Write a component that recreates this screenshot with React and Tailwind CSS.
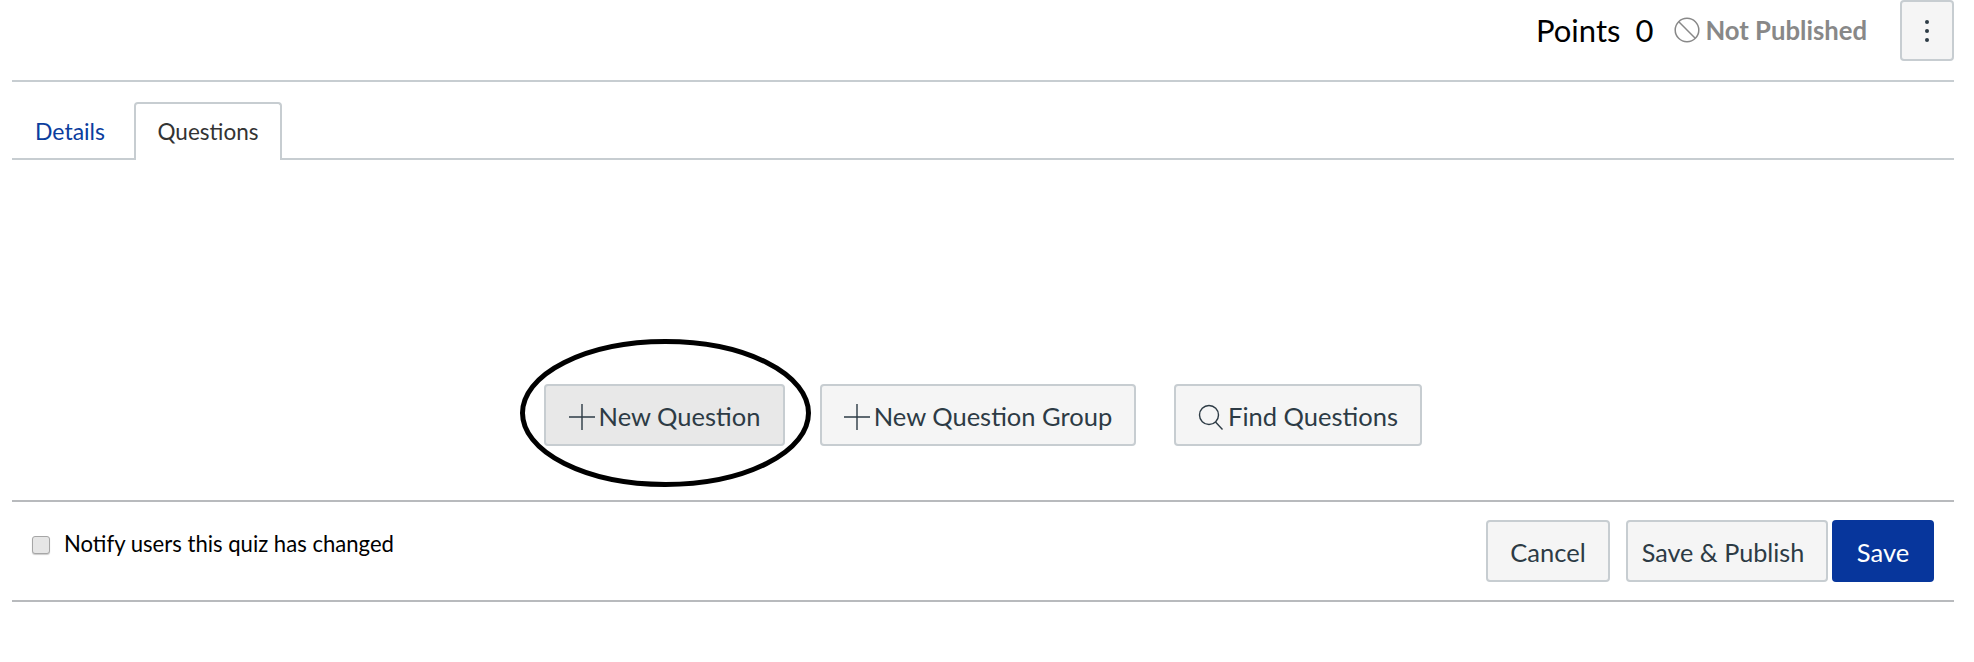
import React from 'react';

const btn = 'h-[62px] flex items-center justify-center whitespace-nowrap rounded-[4px] border-2 border-[#c7cdd1] bg-[#f5f5f5] text-[#2d3b45] text-[25.5px] leading-none pt-[4px]';

const PlusIcon = () => (
  <svg width="26" height="26" viewBox="0 0 26 26" className="mr-[4px] shrink-0" fill="none" stroke="#2d3b45" strokeWidth="1.4">
    <path d="M13 0v26M0 13h26" />
  </svg>
);

const SearchIcon = () => (
  <svg width="26" height="26" viewBox="0 0 26 26" className="mr-[4px] shrink-0" fill="none" stroke="#2d3b45" strokeWidth="1.4">
    <circle cx="11" cy="11" r="9.5" />
    <path d="M17.5 18l7 7.5" />
  </svg>
);

const NotPublishedIcon = () => (
  <svg width="26" height="26" viewBox="0 0 26 26" fill="none" stroke="#888888" strokeWidth="1.5">
    <circle cx="13" cy="13" r="11.8" />
    <path d="M4.8 4.8l16.4 16.4" />
  </svg>
);

export default function App() {
  return (
    <div className="w-full h-[662px] bg-white pl-[12px] pr-[20px] font-['Lato','Open_Sans',sans-serif]">
      {/* Header */}
      <div className="h-[82px] border-b-2 border-[#c7cdd1] flex justify-end items-start">
        <div className="h-[60px] flex items-center">
          <span className="text-[31px] leading-none text-black">Points</span>
          <span className="text-[31px] leading-none text-black ml-[15px]">0</span>
          <div className="ml-[21px] mr-[5px]"><NotPublishedIcon /></div>
          <span className="text-[25.7px] leading-none font-bold text-[#888888] pt-[2px]">Not Published</span>
        </div>
        <button className="ml-[33px] w-[54px] h-[61px] flex flex-col items-center justify-center gap-[5px] rounded-[4px] border-2 border-[#c7cdd1] bg-[#f5f5f5]">
          <span className="w-[4px] h-[4px] rounded-full bg-[#2d3b45]" />
          <span className="w-[4px] h-[4px] rounded-full bg-[#2d3b45]" />
          <span className="w-[4px] h-[4px] rounded-full bg-[#2d3b45]" />
        </button>
      </div>

      {/* Tabs */}
      <div className="mt-[20px] h-[58px] border-b-2 border-[#c7cdd1] flex items-start pl-[23px]">
        <a className="w-[99px] h-[58px] flex items-center text-[23px] text-[#0b3d9e]">Details</a>
        <div className="w-[148px] h-[58px] flex items-center justify-center bg-white border-2 border-b-0 border-[#c7cdd1] rounded-t-[4px] text-[22.5px] text-[#333333] -mb-[2px] relative z-10">
          Questions
        </div>
      </div>

      {/* Question actions */}
      <div className="mt-[224px] h-[62px] flex pl-[532px]">
        <div className="relative">
          <button className={`${btn} w-[241px] !bg-[#e8e8e8]`}>
            <PlusIcon />
            New Question
          </button>
          <svg width="293" height="152" viewBox="0 0 293 152" className="absolute left-[-25px] top-[-47px] pointer-events-none" fill="none" stroke="#000000" strokeWidth="5">
            <ellipse cx="146.5" cy="76" rx="143" ry="71.5" />
          </svg>
        </div>
        <button className={`${btn} w-[316px] ml-[35px]`}>
          <PlusIcon />
          New Question Group
        </button>
        <button className={`${btn} w-[248px] ml-[38px]`}>
          <SearchIcon />
          Find Questions
        </button>
      </div>

      {/* Footer */}
      <div className="mt-[54px] h-[102px] border-y-2 border-[#b8babd] flex items-start justify-between pr-[20px]">
        <label className="h-[83px] flex items-center pl-[20px] text-[22.1px] text-black">
          <span className="w-[18px] h-[18px] mt-[2px] rounded-[3px] border border-[#a6a6a6] bg-[#e6e6e6] shadow-[0_1px_1px_rgba(0,0,0,0.2)] mr-[14px]" />
          Notify users this quiz has changed
        </label>
        <div className="flex mt-[18px]">
          <button className={`${btn} w-[124px]`}>Cancel</button>
          <button className={`${btn} w-[202px] ml-[16px] pr-[8px] !text-[25.2px]`}>Save &amp; Publish</button>
          <button className="h-[62px] w-[102px] ml-[4px] pt-[4px] rounded-[4px] bg-[#07369c] text-white text-[25.5px] leading-none">Save</button>
        </div>
      </div>
    </div>
  );
}
